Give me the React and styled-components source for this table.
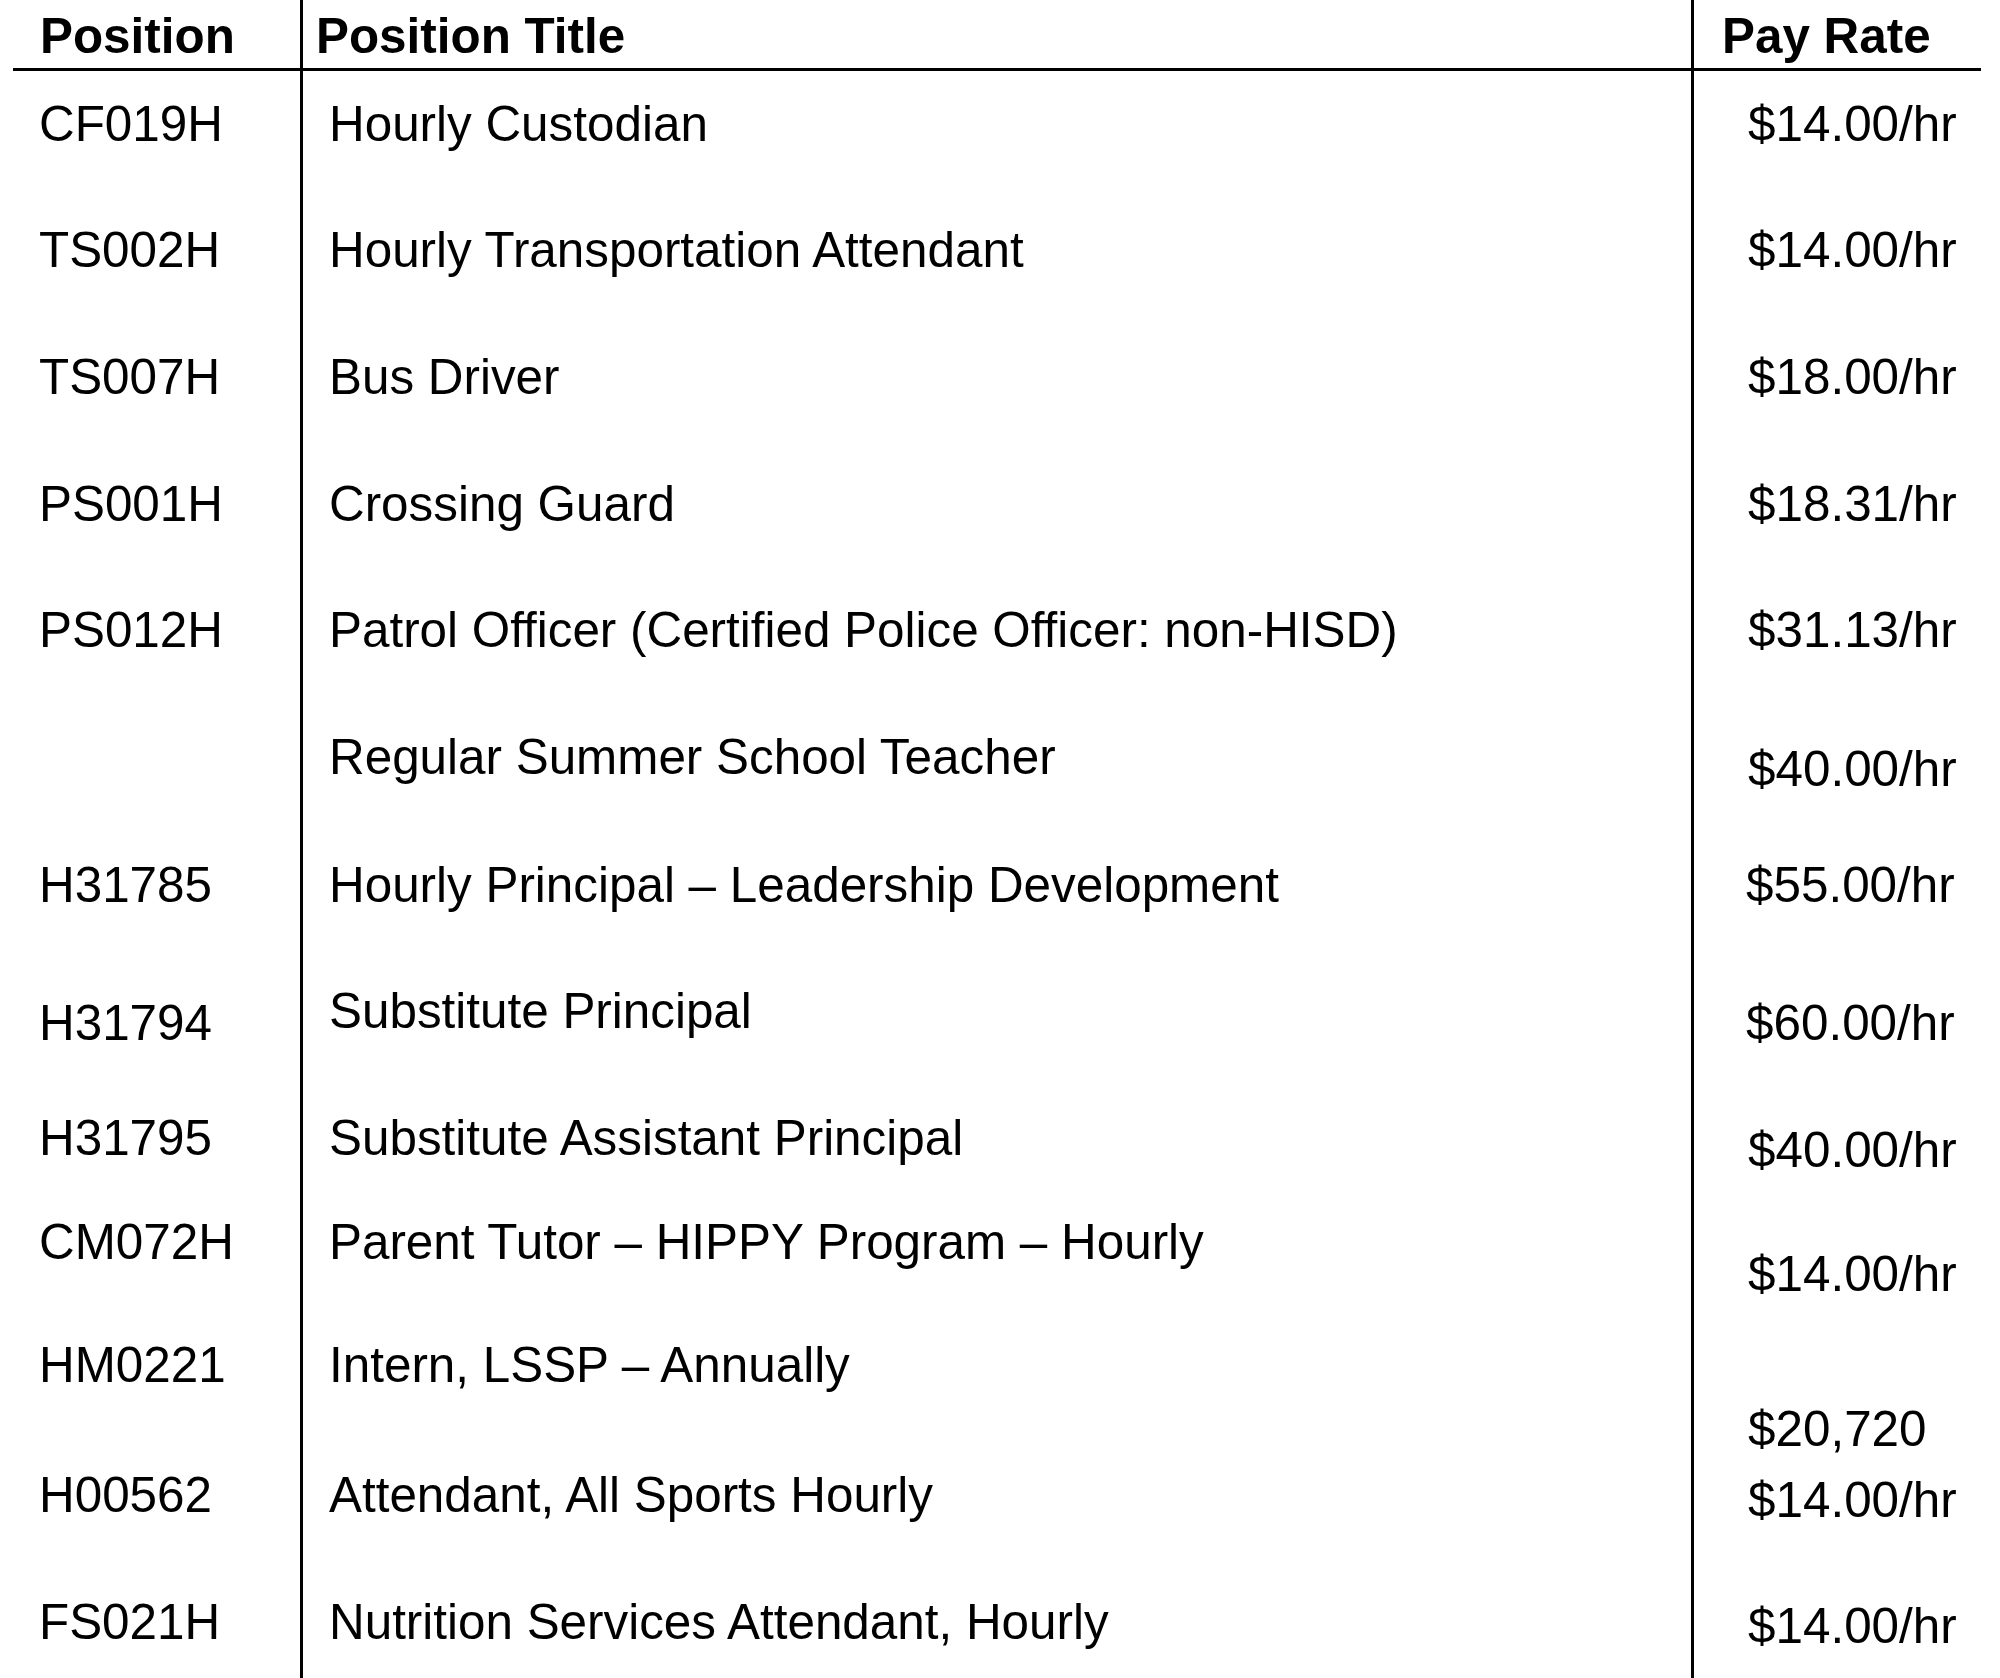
import React from "react";
import styled, { createGlobalStyle } from "styled-components";

const GlobalStyle = createGlobalStyle`
  html, body {
    margin: 0;
    padding: 0;
    background: #fff;
  }
  body {
    font-family: "Liberation Sans", Arial, sans-serif;
    color: #000;
  }
`;

const Table = styled.div`
  display: flex;
  flex-direction: column;
  width: 1968px;
  height: 1678px;
  padding-left: 13px;
  overflow: hidden;
`;

const Row = styled.div`
  display: grid;
  grid-template-columns: 290px 1391px 287px;
  height: ${(props) => props.$height}px;
  flex: ${(props) => (props.$fill ? "1" : "none")};
  box-sizing: border-box;
  border-bottom: ${(props) => (props.$header ? "3px solid #000" : "none")};
`;

const Cell = styled.div`
  box-sizing: border-box;
  border-right: ${(props) => (props.$last ? "none" : "3px solid #000")};
  padding-left: ${(props) => props.$indent}px;
  padding-top: ${(props) => props.$top}px;
  font-size: 49.4px;
  line-height: 56px;
  font-weight: ${(props) => (props.$bold ? 700 : 400)};
  white-space: nowrap;
`;

const rows = [
  { code: "CF019H", title: "Hourly Custodian", pay: "$14.00/hr", height: 126 },
  { code: "TS002H", title: "Hourly Transportation Attendant", pay: "$14.00/hr", height: 127 },
  { code: "TS007H", title: "Bus Driver", pay: "$18.00/hr", height: 127 },
  { code: "PS001H", title: "Crossing Guard", pay: "$18.31/hr", height: 126 },
  { code: "PS012H", title: "Patrol Officer (Certified Police Officer: non-HISD)", pay: "$31.13/hr", height: 127 },
  { code: "", title: "Regular Summer School Teacher", pay: "$40.00/hr", height: 128, payShift: 12 },
  { code: "H31785", title: "Hourly Principal \u2013 Leadership Development", pay: "$55.00/hr", height: 138, payIndent: 52 },
  { code: "H31794", title: "Substitute Principal", pay: "$60.00/hr", height: 115, titleShift: -12, payIndent: 52 },
  { code: "H31795", title: "Substitute Assistant Principal", pay: "$40.00/hr", height: 104, payShift: 12 },
  { code: "CM072H", title: "Parent Tutor \u2013 HIPPY Program \u2013 Hourly", pay: "$14.00/hr", height: 123, payShift: 32 },
  { code: "HM0221", title: "Intern, LSSP \u2013 Annually", pay: "$20,720", height: 130, payShift: 64 },
  { code: "H00562", title: "Attendant, All Sports Hourly", pay: "$14.00/hr", height: 127, payShift: 5 },
  { code: "FS021H", title: "Nutrition Services Attendant, Hourly", pay: "$14.00/hr", fill: true, payShift: 4 },
];

const BASE_TOP = 25;

const App = () => {
  return (
    <>
      <GlobalStyle />
      <Table>
        <Row $header $height={71}>
          <Cell $bold $indent={27} $top={8}>
            Position
          </Cell>
          <Cell $bold $indent={13} $top={8}>
            Position Title
          </Cell>
          <Cell $bold $last $indent={28} $top={8}>
            Pay Rate
          </Cell>
        </Row>
        {rows.map((row, i) => (
          <Row key={i} $height={row.height} $fill={row.fill}>
            <Cell $indent={26} $top={BASE_TOP}>
              {row.code}
            </Cell>
            <Cell $indent={26} $top={BASE_TOP + (row.titleShift || 0)}>
              {row.title}
            </Cell>
            <Cell
              $last
              $indent={row.payIndent || 54}
              $top={BASE_TOP + (row.payShift || 0)}
            >
              {row.pay}
            </Cell>
          </Row>
        ))}
      </Table>
    </>
  );
};

export default App;
